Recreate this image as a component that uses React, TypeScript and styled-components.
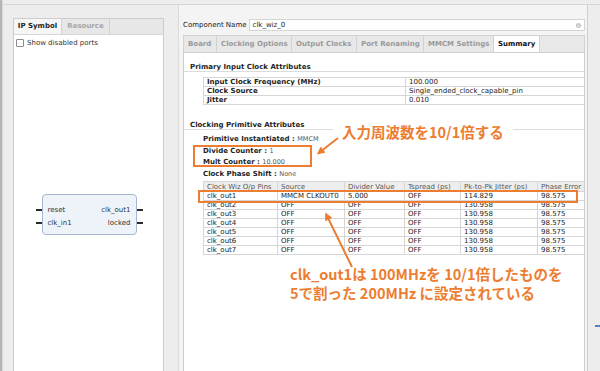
import React from 'react';
import styled, { createGlobalStyle } from 'styled-components';

const GlobalStyle = createGlobalStyle`
  html, body {
    margin: 0;
    padding: 0;
  }
  body {
    width: 600px;
    height: 371px;
    overflow: hidden;
    background: #ededed;
    font-family: 'DejaVu Sans', Verdana, sans-serif;
  }
`;

const ORANGE = '#ed7d31';

const Screen = styled.div`
  display: flex;
  width: 600px;
  height: 371px;
  overflow: hidden;
  background: #ededed;
`;

const LeftEdge = styled.div`
  flex-shrink: 0;
  width: 3px;
  background: linear-gradient(to right, #b5b5b5 0 2px, #dadada 2px);
`;

const LeftPane = styled.div`
  flex-shrink: 0;
  width: 175px;
  box-sizing: border-box;
  display: flex;
  flex-direction: column;
  padding: 13px 14px 0 10px;
  border-top: 1px solid #d6d6d6;
  margin-top: 4px;
`;

const TabBox = styled.div`
  flex: 1;
  display: flex;
  flex-direction: column;
  background: #fff;
  border: 1px solid #cdcdcd;
  border-bottom: none;
`;

const TabStrip = styled.div`
  display: flex;
  height: 15px;
  background: #e7e7e7;
  border-bottom: 1px solid #d6d6d6;
`;

const Tab = styled.div<{ $active?: boolean; $w: number; $center?: boolean }>`
  flex-shrink: 0;
  width: ${(p) => p.$w}px;
  padding-left: ${(p) => (p.$center ? 0 : 4)}px;
  box-sizing: border-box;
  text-align: ${(p) => (p.$center ? 'center' : 'left')};
  font-size: 7px;
  font-weight: bold;
  line-height: 15px;
  white-space: nowrap;
  overflow: hidden;
  color: ${(p) => (p.$active ? '#1e1e1e' : '#a6a6a6')};
  background: ${(p) => (p.$active ? '#f6f6f6' : 'transparent')};
  border-right: 1px solid #d2d2d2;
`;

const CheckRow = styled.label`
  display: flex;
  align-items: center;
  gap: 3px;
  padding: 4px 2px;
  font-size: 7px;
  color: #333;
`;

const CheckBox = styled.span`
  width: 6px;
  height: 6px;
  border: 1px solid #8c8c8c;
  border-radius: 1px;
  background: #fff;
`;

const SymbolArea = styled.div`
  flex: 1;
  display: flex;
  align-items: center;
  justify-content: center;
  padding: 7px 0 0 1px;
`;

const Symbol = styled.div`
  display: flex;
  align-items: flex-start;
`;

const PinColumn = styled.div`
  display: flex;
  flex-direction: column;
  padding-top: 10px;
`;

const Pin = styled.div`
  height: 12.6px;
  display: flex;
  align-items: center;
  &::after {
    content: '';
    width: 6px;
    height: 2px;
    background: #2b2b2b;
  }
`;

const SymbolBox = styled.div`
  width: 95px;
  height: 41px;
  box-sizing: border-box;
  background: #eef3fa;
  border: 1px solid #a6b7d2;
  border-radius: 4px;
  display: flex;
  justify-content: space-between;
  padding: 9px 5px 0;
`;

const PortList = styled.div<{ $right?: boolean }>`
  display: flex;
  flex-direction: column;
  align-items: ${(p) => (p.$right ? 'flex-end' : 'flex-start')};
`;

const Port = styled.div`
  height: 12.6px;
  line-height: 12.6px;
  font-size: 7px;
  color: #333;
`;

const RightPane = styled.div`
  flex: 1;
  min-width: 0;
  display: flex;
  flex-direction: column;
  padding: 14px 2px 0 4px;
  margin-top: 4px;
  border-top: 1px solid #d6d6d6;
  border-left: 1px solid #dadada;
  background: #f4f4f4;
`;

const NameRow = styled.div`
  display: flex;
  align-items: center;
  gap: 2px;
  height: 12px;
`;

const Label = styled.span`
  font-size: 7px;
  color: #222;
  white-space: nowrap;
`;

const NameInput = styled.div`
  flex: 1;
  height: 12px;
  box-sizing: border-box;
  border: 1px solid #d4d4d4;
  background: #fff;
  display: flex;
  align-items: center;
  justify-content: space-between;
  padding: 0 3px;
  font-size: 7px;
  color: #222;
`;

const ClearIcon = styled.span`
  width: 5px;
  height: 5px;
  border-radius: 50%;
  background: #c4c4c4;
  color: #fff;
  font-size: 4px;
  line-height: 5px;
  text-align: center;
`;

const PageTabs = styled.div`
  display: flex;
  height: 16px;
  margin-top: 4px;
  background: #e8e8e8;
  border: 1px solid #d2d2d2;
  border-bottom: none;
  & > div {
    line-height: 16px;
  }
  & > div:not(:last-child) {
    color: #9a9a9a;
  }
`;

const Content = styled.div`
  flex: 1;
  position: relative;
  overflow: hidden;
  background: #fff;
  border: 1px solid #cfcfcf;
  border-bottom: none;
`;

const SectionTitle = styled.div<{ $gap: number }>`
  margin-top: ${(p) => p.$gap}px;
  padding-left: 6px;
  font-size: 7px;
  line-height: 8px;
  font-weight: bold;
  color: #1e1e1e;
  border-bottom: 1px solid #dcdcdc;
`;

const Grid = styled.table<{ $w: number; $top: number }>`
  width: ${(p) => p.$w}px;
  margin: ${(p) => p.$top}px 0 0 19px;
  border-collapse: collapse;
  table-layout: fixed;
  font-size: 7px;
  color: #222;
  white-space: nowrap;
`;

const Cell = styled.td<{ $bold?: boolean; $head?: boolean; $h?: number }>`
  height: ${(p) => p.$h ?? 9}px;
  padding: 0 3px;
  box-sizing: border-box;
  line-height: 8px;
  border: 1px solid #d6d6d6;
  font-weight: ${(p) => (p.$bold ? 'bold' : 'normal')};
  text-align: left;
  color: ${(p) => (p.$head ? '#555' : '#222')};
  background: ${(p) => (p.$head ? '#eeeeee' : '#fff')};
  overflow: hidden;
`;

const AttrList = styled.div`
  padding: 4px 0 0 19px;
`;

const Attr = styled.div`
  height: 11.5px;
  line-height: 11.5px;
  font-size: 7px;
  font-weight: bold;
  color: #1e1e1e;
  & > span {
    font-weight: normal;
    font-size: 6.5px;
    color: #555;
  }
`;

const HighlightBox = styled.div<{ $x: number; $y: number; $w: number; $h: number }>`
  position: absolute;
  left: ${(p) => p.$x}px;
  top: ${(p) => p.$y}px;
  width: ${(p) => p.$w}px;
  height: ${(p) => p.$h}px;
  box-sizing: border-box;
  border: 2px solid ${ORANGE};
`;

const Note = styled.div<{ $x: number; $y: number; $bg?: boolean }>`
  position: absolute;
  left: ${(p) => p.$x}px;
  top: ${(p) => p.$y}px;
  padding: 0 9px;
  background: ${(p) => (p.$bg ? '#fff' : 'transparent')};
  color: ${ORANGE};
  font-family: 'Noto Sans CJK JP', 'Noto Sans', sans-serif;
  font-weight: bold;
  font-size: 14.5px;
  line-height: 19px;
  white-space: nowrap;
`;

const ArrowLayer = styled.svg`
  position: absolute;
  left: 0;
  top: 0;
  width: 100%;
  height: 100%;
  pointer-events: none;
`;

const RightEdge = styled.div`
  flex-shrink: 0;
  width: 12px;
  margin-top: 4px;
  border-top: 1px solid #d6d6d6;
  border-left: 1px solid #cfcfcf;
  background: #ededed;
  display: flex;
  flex-direction: column;
  align-items: flex-end;
`;

const EdgeMark = styled.div`
  width: 5px;
  height: 2px;
  margin-top: 320px;
  background: #5b7fd0;
`;

const inputRows: [string, string][] = [
  ['Input Clock Frequency (MHz)', '100.000'],
  ['Clock Source', 'Single_ended_clock_capable_pin'],
  ['Jitter', '0.010'],
];

const outCols = [
  { name: 'Clock Wiz O/p Pins', w: 74 },
  { name: 'Source', w: 67 },
  { name: 'Divider Value', w: 60 },
  { name: 'Tspread (ps)', w: 56 },
  { name: 'Pk-to-Pk Jitter (ps)', w: 77 },
  { name: 'Phase Error (degrees)', w: 80 },
];

const outRows = [
  ['clk_out1', 'MMCM CLKOUT0', '5.000', 'OFF', '114.829', '98.575'],
  ...[2, 3, 4, 5, 6, 7].map((n) => [`clk_out${n}`, 'OFF', 'OFF', 'OFF', '130.958', '98.575']),
];

const pageTabs = [
  { name: 'Board', w: 33 },
  { name: 'Clocking Options', w: 75 },
  { name: 'Output Clocks', w: 65 },
  { name: 'Port Renaming', w: 67 },
  { name: 'MMCM Settings', w: 70 },
];

const App: React.FC = () => {
  return (
    <>
      <GlobalStyle />
      <Screen>
        <LeftEdge />
        <LeftPane>
          <TabBox>
            <TabStrip>
              <Tab $active $center $w={48}>
                IP Symbol
              </Tab>
              <Tab $center $w={48}>
                Resource
              </Tab>
            </TabStrip>
            <CheckRow>
              <CheckBox />
              Show disabled ports
            </CheckRow>
            <SymbolArea>
              <Symbol>
                <PinColumn>
                  <Pin />
                  <Pin />
                </PinColumn>
                <SymbolBox>
                  <PortList>
                    <Port>reset</Port>
                    <Port>clk_in1</Port>
                  </PortList>
                  <PortList $right>
                    <Port>clk_out1</Port>
                    <Port>locked</Port>
                  </PortList>
                </SymbolBox>
                <PinColumn>
                  <Pin />
                  <Pin />
                </PinColumn>
              </Symbol>
            </SymbolArea>
          </TabBox>
        </LeftPane>

        <RightPane>
          <NameRow>
            <Label>Component Name</Label>
            <NameInput>
              clk_wiz_0
              <ClearIcon>×</ClearIcon>
            </NameInput>
          </NameRow>
          <PageTabs>
            {pageTabs.map((t) => (
              <Tab key={t.name} $w={t.w}>
                {t.name}
              </Tab>
            ))}
            <Tab $active $w={46} style={{ background: '#fff', color: '#111' }}>
              Summary
            </Tab>
          </PageTabs>
          <Content>
            <SectionTitle $gap={10}>Primary Input Clock Attributes</SectionTitle>
            <Grid $w={402} $top={5}>
              <colgroup>
                <col style={{ width: 202 }} />
                <col style={{ width: 200 }} />
              </colgroup>
              <tbody>
                {inputRows.map(([k, v]) => (
                  <tr key={k}>
                    <Cell $bold>{k}</Cell>
                    <Cell>{v}</Cell>
                  </tr>
                ))}
              </tbody>
            </Grid>

            <SectionTitle $gap={16}>Clocking Primitive Attributes</SectionTitle>
            <AttrList>
              <Attr>
                Primitive Instantiated : <span>MMCM</span>
              </Attr>
              <Attr>
                Divide Counter : <span>1</span>
              </Attr>
              <Attr>
                Mult Counter : <span>10.000</span>
              </Attr>
              <Attr>
                Clock Phase Shift : <span>None</span>
              </Attr>
            </AttrList>

            <Grid $w={414} $top={1}>
              <colgroup>
                {outCols.map((c) => (
                  <col key={c.name} style={{ width: c.w }} />
                ))}
              </colgroup>
              <thead>
                <tr>
                  {outCols.map((c) => (
                    <Cell as="th" key={c.name} $head $h={10}>
                      {c.name}
                    </Cell>
                  ))}
                </tr>
              </thead>
              <tbody>
                {outRows.map((r) => (
                  <tr key={r[0]}>
                    {r.map((v, i) => (
                      <Cell key={i}>{v}</Cell>
                    ))}
                  </tr>
                ))}
              </tbody>
            </Grid>

            <HighlightBox $x={9} $y={92} $w={119} $h={22} />
            <HighlightBox $x={14} $y={137} $w={380} $h={13} />

            <Note $x={149} $y={69} $bg>
              入力周波数を10/1倍する
            </Note>
            <Note $x={97} $y={211}>
              <div>clk_out1は 100MHzを 10/1倍したものを</div>
              <div>5で割った 200MHz に設定されている</div>
            </Note>

            <ArrowLayer>
              <defs>
                <marker id="head" viewBox="0 0 10 10" refX="5" refY="5" markerWidth="4" markerHeight="4" orient="auto-start-reverse">
                  <path d="M0 0 L10 5 L0 10 z" fill={ORANGE} />
                </marker>
              </defs>
              <line x1={154} y1={85} x2={136} y2={99} stroke={ORANGE} strokeWidth={2} markerEnd="url(#head)" />
              <line x1={168} y1={214} x2={143} y2={163} stroke={ORANGE} strokeWidth={2} markerEnd="url(#head)" />
            </ArrowLayer>
          </Content>
        </RightPane>
        <RightEdge>
          <EdgeMark />
        </RightEdge>
      </Screen>
    </>
  );
};

export default App;
